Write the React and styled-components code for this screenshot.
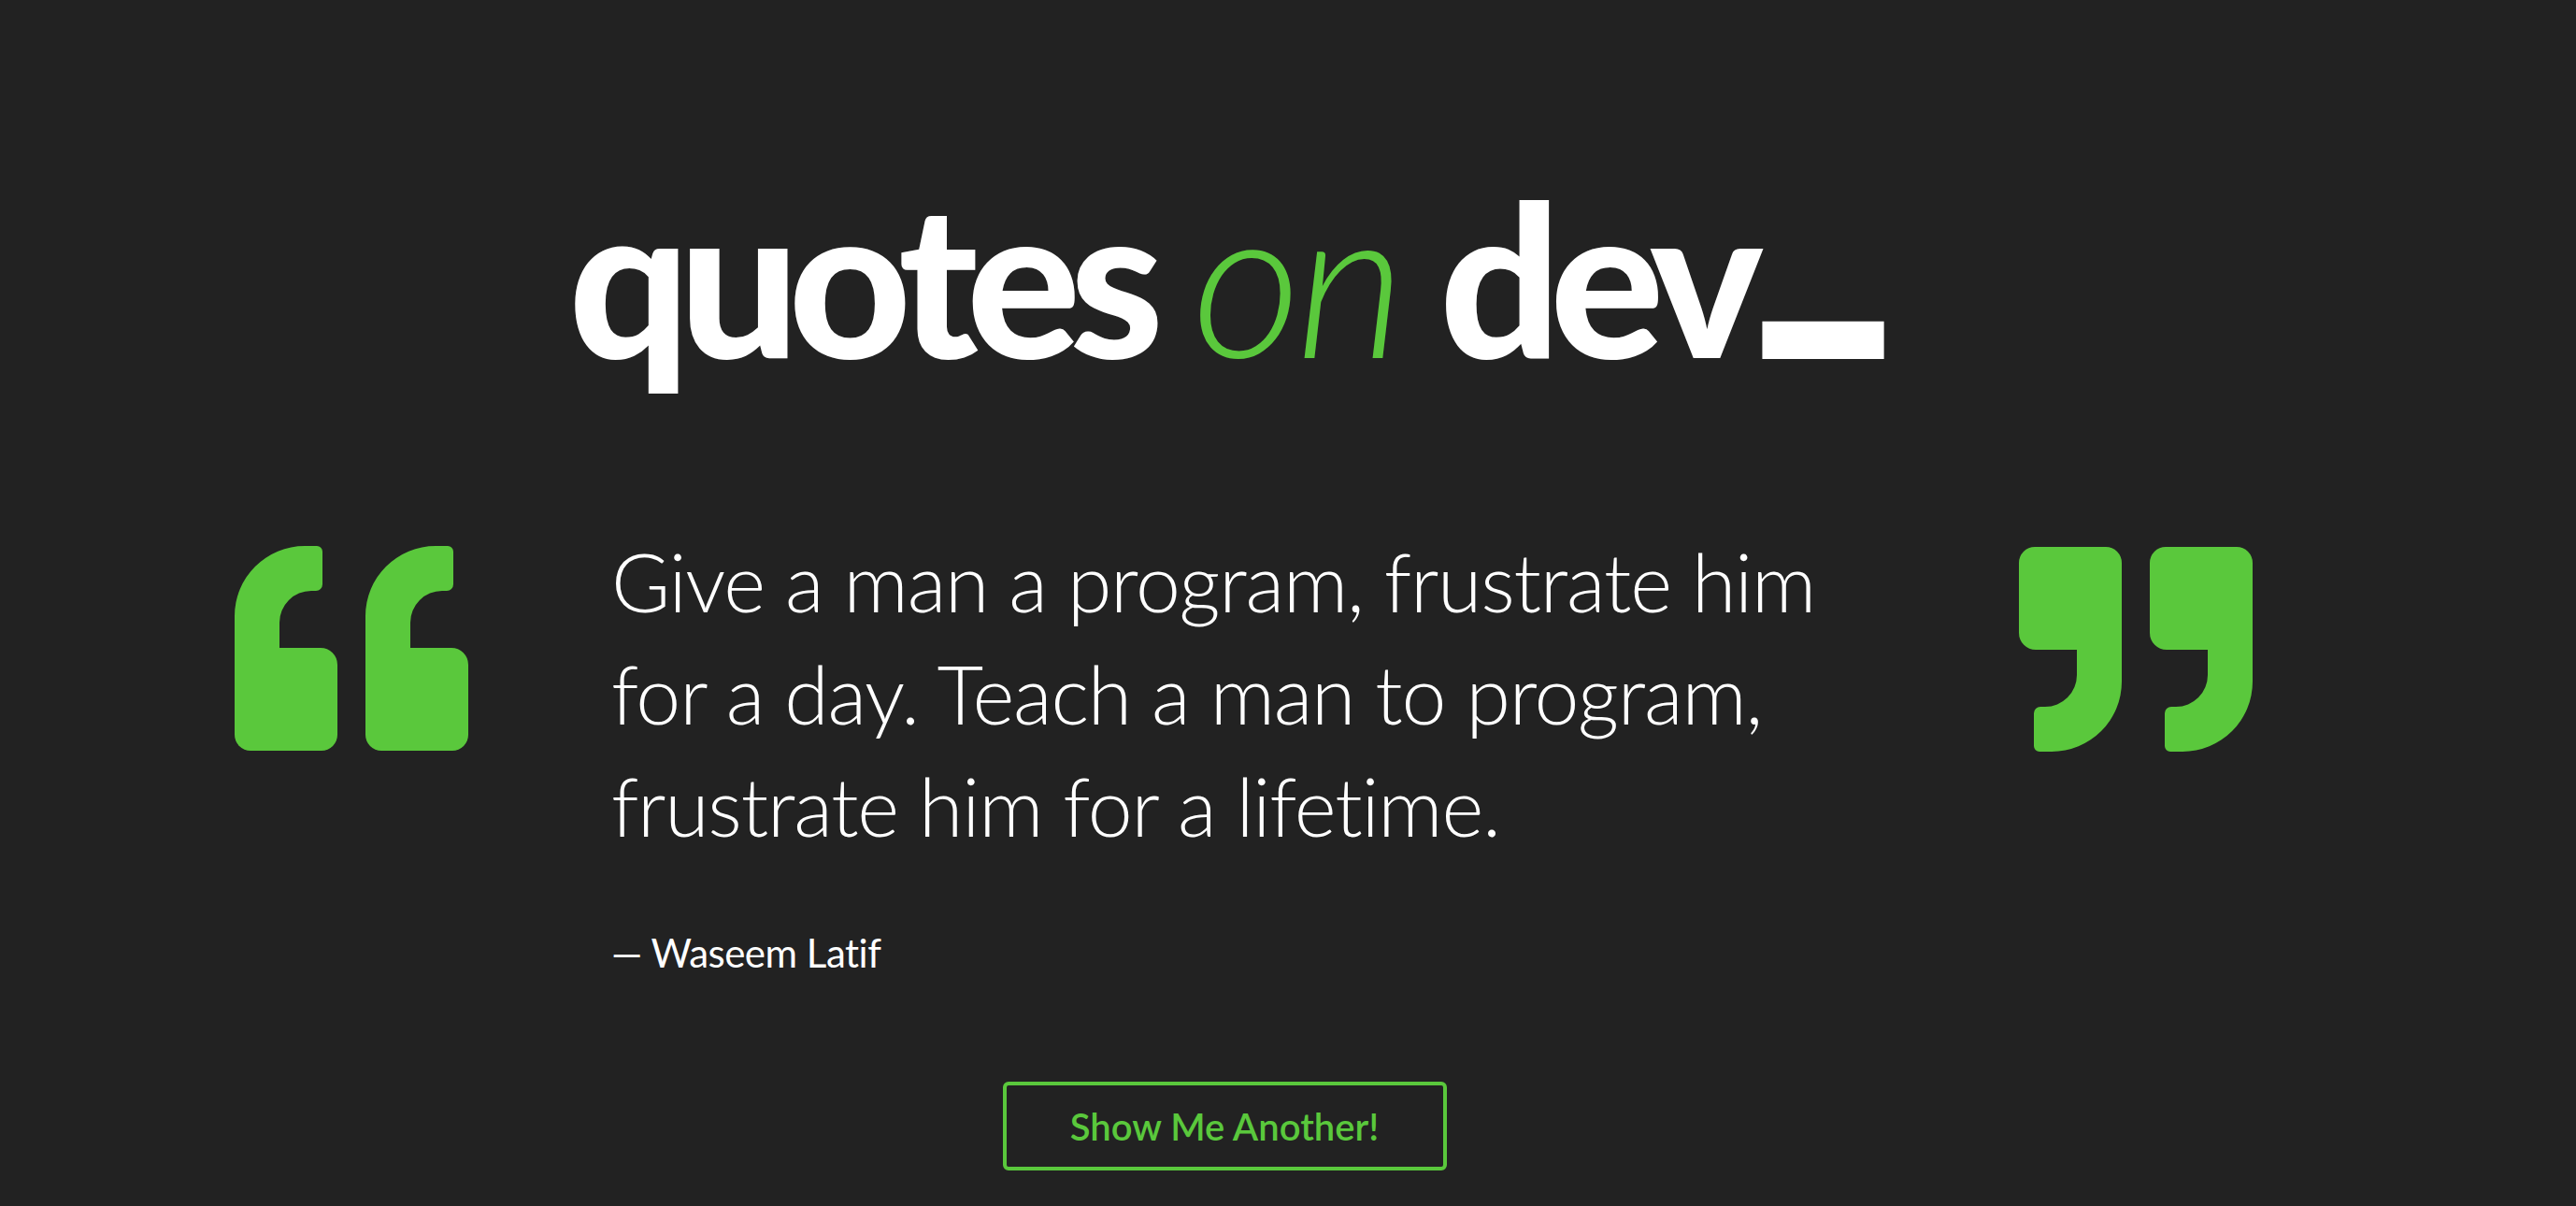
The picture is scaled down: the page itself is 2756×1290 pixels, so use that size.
import React from "react";
import styled, { createGlobalStyle } from "styled-components";

const GlobalStyle = createGlobalStyle`
  html, body {
    margin: 0;
    padding: 0;
    background: #222222;
  }
  body {
    font-family: "Lato", "Open Sans", sans-serif;
    color: #ffffff;
  }
`;

const green = "#5ac83c";

const Page = styled.main`
  width: 2756px;
  height: 1290px;
  box-sizing: border-box;
  padding: 0 0 0 251px;
  display: flex;
  flex-direction: column;
  overflow: hidden;
`;

const Header = styled.header`
  width: 2118px;
  height: 562px;
  box-sizing: border-box;
  display: flex;
  justify-content: center;
  padding-top: 177px;
`;

const Title = styled.h1`
  margin: 0;
  font-family: "Lato", sans-serif;
  font-weight: 900;
  font-size: 228px;
  line-height: 236px;
  letter-spacing: -12px;
  color: #ffffff;
  white-space: nowrap;
`;

const Accent = styled.span`
  color: ${green};
  font-weight: 300;
  font-style: italic;
  letter-spacing: -6px;
`;

// thick cursor-style underscore that sits on the baseline
const Cursor = styled.span`
  display: inline-block;
  margin: 0 44px 0 -2px;
  transform-origin: 0 232px;
  transform: translateY(-41px) scale(1.45, 2);
`;

const QuoteRow = styled.section`
  display: grid;
  grid-template-columns: 252px 151px 1312px 194px 252px;
  align-items: start;
`;

const Marks = styled.div`
  grid-column: ${({ $side }) => ($side === "right" ? 5 : 1)};
  display: flex;
  gap: 30px;
  margin-top: 22px;
`;

const QuoteBody = styled.div`
  grid-column: 3;
  display: flex;
  flex-direction: column;
`;

const QuoteText = styled.p`
  margin: 0;
  font-family: "Lato", sans-serif;
  font-weight: 300;
  font-size: 86px;
  line-height: 120px;
  letter-spacing: -1.2px;
  color: #ffffff;
`;

const Author = styled.p`
  margin: 72px 0 0;
  font-family: "Lato", sans-serif;
  font-weight: 400;
  font-size: 42px;
  line-height: 50px;
  letter-spacing: -0.5px;
  color: #ffffff;
`;

const Footer = styled.div`
  width: 2118px;
  display: flex;
  justify-content: center;
  padding-top: 113px;
`;

const Button = styled.button`
  width: 475px;
  height: 95px;
  box-sizing: border-box;
  background: transparent;
  border: 4px solid ${green};
  border-radius: 6px;
  color: ${green};
  font-family: "Lato", sans-serif;
  font-weight: 600;
  font-size: 40px;
  cursor: pointer;
`;

const QuoteGlyph = ({ flip }) => (
  <svg
    width="110"
    height="220"
    viewBox="0 0 110 220"
    style={flip ? { transform: "rotate(180deg)" } : undefined}
  >
    <path
      fill={green}
      d="M 75 0 H 88 A 6 6 0 0 1 94 6 V 41 A 7 7 0 0 1 87 48 H 82 A 34 34 0 0 0 48 82 V 109 H 92 A 18 18 0 0 1 110 127 V 202 A 17 17 0 0 1 93 219 H 17 A 17 17 0 0 1 0 202 V 75 A 75 75 0 0 1 75 0 Z"
    />
  </svg>
);

export default function App() {
  return (
    <>
      <GlobalStyle />
      <Page>
        <Header>
          <Title>
            quotes <Accent>on</Accent> dev<Cursor>_</Cursor>
          </Title>
        </Header>
        <QuoteRow>
          <Marks $side="left">
            <QuoteGlyph />
            <QuoteGlyph />
          </Marks>
          <QuoteBody>
            <QuoteText>
              Give a man a program, frustrate him for a day. Teach a man to program, frustrate him for a lifetime.
            </QuoteText>
            <Author>— Waseem Latif</Author>
          </QuoteBody>
          <Marks $side="right">
            <QuoteGlyph flip />
            <QuoteGlyph flip />
          </Marks>
        </QuoteRow>
        <Footer>
          <Button>Show Me Another!</Button>
        </Footer>
      </Page>
    </>
  );
}
